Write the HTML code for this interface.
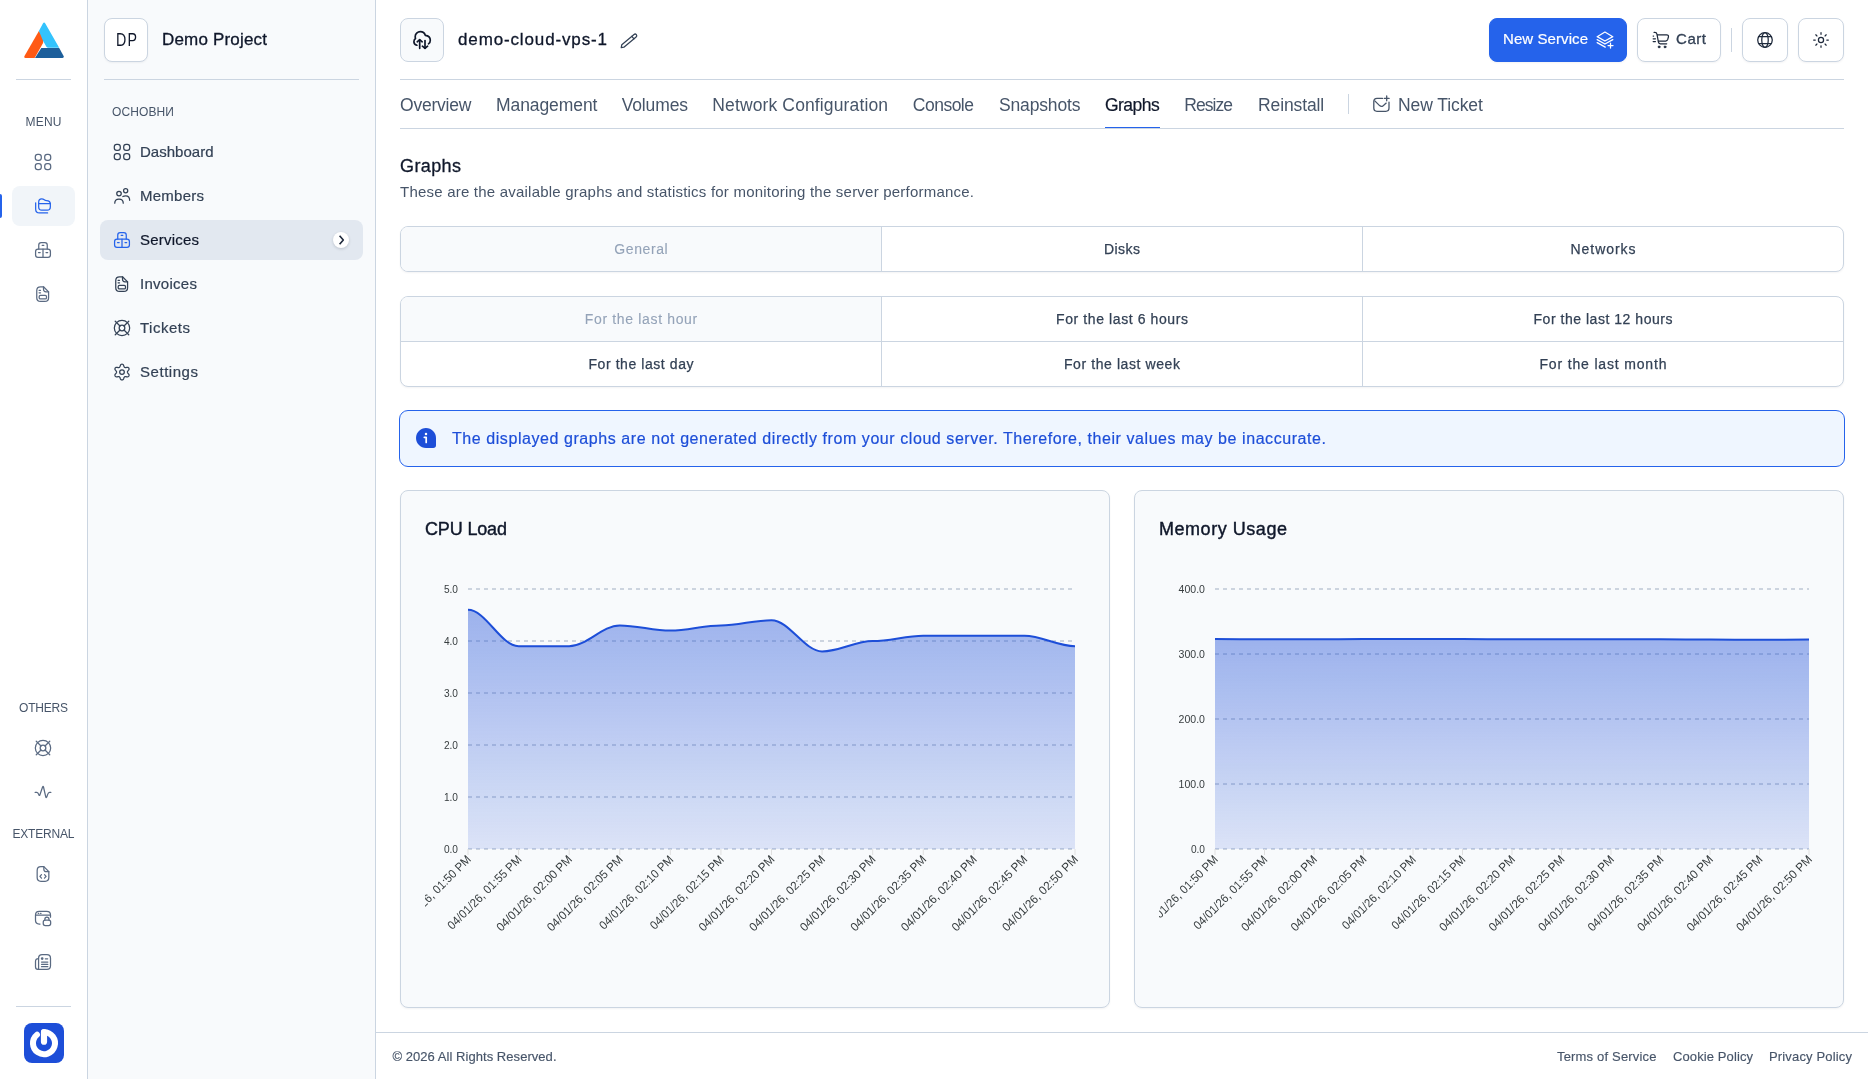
<!DOCTYPE html><html lang="en"><head><meta charset="utf-8"><title>Graphs - demo-cloud-vps-1</title><style>
*{box-sizing:border-box;margin:0;padding:0}
html,body{width:1868px;height:1079px;overflow:hidden;background:#fff}
body{font-family:"Liberation Sans",sans-serif;color:#334155;position:relative;-webkit-font-smoothing:antialiased}
#root{position:absolute;left:0;top:0;width:1868px;height:1079px;will-change:transform}
.abs{position:absolute}
.ic{display:inline-flex;align-items:center;justify-content:center;flex:none}
.ic svg{display:block}
.t{position:absolute;white-space:nowrap;line-height:20px;height:20px}
#rail{left:0;top:0;width:88px;height:1079px;background:#fff;border-right:1px solid #cbd5e1}
#side{left:88px;top:0;width:288px;height:1079px;background:#f8fafc;border-right:1px solid #cbd5e1}
.hr{position:absolute;height:1px;background:#cbd5e1}
.rl{position:absolute;margin-top:1px;left:0;width:87px;text-align:center;font-size:12px;color:#475569;line-height:16px;height:16px}
.ri{position:absolute;left:33px;width:20px;height:20px;color:#5a6a82}
.si{position:absolute;left:100px;width:263px;height:40px;border-radius:8px;color:#334155}
.si .ic{position:absolute;left:12px;top:10px}
.si .lb{position:absolute;left:40px;top:10px;line-height:20px;font-size:15px;font-weight:500;white-space:nowrap;-webkit-text-stroke:.2px currentColor}
.btn{position:absolute;top:18px;height:44px;border-radius:8px;border:1px solid #cbd5e1;background:#fff;box-shadow:0 1px 2px rgba(15,23,42,.05)}
.tab{position:absolute;top:95px;line-height:20px;font-size:17.500px;color:#475569;white-space:nowrap}
.seg{position:absolute;left:400px;width:1444px;border:1px solid #cbd5e1;border-radius:8px;background:#fff;overflow:hidden;box-shadow:0 1px 2px rgba(15,23,42,.05)}
.cell{position:absolute;height:44px;width:480px;text-align:center;font-size:14px;line-height:44px;color:#334155;-webkit-text-stroke:.25px currentColor;white-space:nowrap}
.cell.on{background:#f8fafc;color:#94a3b8;-webkit-text-stroke:.1px currentColor}
.vl{position:absolute;width:1px;background:#cbd5e1;top:0;bottom:0}
.card{position:absolute;top:490px;width:710px;height:518px;border:1px solid #cbd5e1;border-radius:8px;background:#f8fafc;box-shadow:0 1px 2px rgba(15,23,42,.05)}
.card h3{position:absolute;left:24px;top:26px;font-size:18px;line-height:24px;font-weight:500;color:#0f172a;white-space:nowrap;-webkit-text-stroke:.4px currentColor}
.card svg{position:absolute;left:0;top:0}
.ft{position:absolute;top:1047px;line-height:20px;font-size:13px;color:#475569;white-space:nowrap;-webkit-text-stroke:.15px currentColor}
</style></head><body><div id="root">
<div id="rail" class="abs">
<svg class="abs" style="left:24px;top:20.800px" width="40" height="38.750" viewBox="0 0 40 38" preserveAspectRatio="none">
<path d="M14.900 9.800 L19.100 15.400 L19.100 21.500 L10.600 36.300 L1.500 36.300 Q-.3 36.100 .5 34.300 Z" fill="#ff5a14"/>
<path d="M14.900 9.800 L18.900 2.400 Q20.100 .7 21.300 2.400 L35.200 26.300 L24.200 26.300 Q23 26.300 22.400 25.200 L19.100 19.500 Z" fill="#33c3fd"/>
<path d="M17.300 26.400 L35.200 26.400 L39.600 34.200 Q40.400 36.100 38.500 36.300 L11 36.300 Z" fill="#1d5f9b"/>
</svg>
<div class="hr" style="left:16px;top:79px;width:55px"></div>
<div class="rl" style="top:113px"><span style="letter-spacing:0.219px;margin-right:-0.219px">MENU</span></div>
<div class="ri" style="top:152px;"><svg width="20" height="20" viewBox="0 0 24 24" fill="none" stroke="currentColor" stroke-width="1.5" stroke-linecap="round" stroke-linejoin="round" ><rect x="2.75" y="2.75" width="7.2" height="7.2" rx="2.9"/><rect x="2.75" y="14.05" width="7.2" height="7.2" rx="2.9"/><rect x="14.05" y="2.75" width="7.2" height="7.2" rx="2.9"/><rect x="14.05" y="14.05" width="7.2" height="7.2" rx="2.9"/></svg></div>
<div class="abs" style="left:0;top:194px;width:2px;height:24px;background:#2563eb;border-radius:0 2px 2px 0"></div>
<div class="abs" style="left:12px;top:186px;width:63px;height:40px;border-radius:8px;background:#f1f5f9"></div>
<div class="ri" style="top:196px;color:#2563eb"><svg width="20" height="20" viewBox="0 0 24 24" fill="none" stroke="currentColor" stroke-width="1.5" stroke-linecap="round" stroke-linejoin="round" ><path d="M3.200 8.200v7.600c0 3 1.500 4.500 4.500 4.500h9.800"/><path d="M6.800 7.400c0-2.700 1.200-3.900 3.600-3.900 1.400 0 2.200.3 3.100 1 .9.700 1.500.9 2.700.9 3 0 4.600 1.300 4.600 4.300v3.400c0 2.500-1.300 3.800-3.800 3.800h-6.400c-2.500 0-3.800-1.300-3.800-3.800z"/><path d="M6.800 9.200h14"/></svg></div>
<div class="ri" style="top:240px;"><svg width="20" height="20" viewBox="0 0 24 24" fill="none" stroke="currentColor" stroke-width="1.5" stroke-linecap="round" stroke-linejoin="round" ><path d="M6.9 10.9V5.9c0-1.9 1-2.9 2.9-2.9h4.4c1.9 0 2.9 1 2.9 2.9v5"/><rect x="3.1" y="10.9" width="17.8" height="10" rx="2.9"/><path d="M12 10.9v10"/><path d="M11 6.4h2"/><path d="M6.6 15h2"/><path d="M15.6 15h2"/></svg></div>
<div class="ri" style="top:284px;"><svg width="20" height="20" viewBox="0 0 24 24" fill="none" stroke="currentColor" stroke-width="1.5" stroke-linecap="round" stroke-linejoin="round" ><path d="M12.6 3.3H9c-3 0-4.5 1.5-4.500 4.500v8.600c0 3 1.500 4.500 4.500 4.500h5.200c3 0 4.500-1.500 4.500-4.500V9.400z"/><path d="M12.600 3.300v3.100c0 2 1 3 3 3h3.100"/><path d="M7.300 7.600h1.700"/><path d="M7.300 10.600h1.700"/><rect x="7.4" y="13.700" width="8.800" height="4.200" rx="1.500"/></svg></div>
<div class="rl" style="top:699px"><span style="letter-spacing:-0.203px;margin-right:0.203px">OTHERS</span></div>
<div class="ri" style="top:738px"><svg width="20" height="20" viewBox="0 0 24 24" fill="none" stroke="currentColor" stroke-width="1.5" stroke-linecap="round" stroke-linejoin="round" ><circle cx="12" cy="12" r="9.200"/><circle cx="12" cy="12" r="3.400"/><path d="M3.900 3.900l5.700 5.700"/><path d="M20.100 3.900l-5.700 5.700"/><path d="M3.900 20.100l5.700-5.700"/><path d="M20.100 20.100l-5.700-5.700"/></svg></div>
<div class="ri" style="top:782px"><svg width="20" height="20" viewBox="0 0 24 24" fill="none" stroke="currentColor" stroke-width="1.5" stroke-linecap="round" stroke-linejoin="round" ><path d="M2.600 12.500h2c1.300 0 1.800 1 2.300 2.600.4 1.300 1 1.500 1.400.2L11.500 6c.3-1 .8-1 1.100 0l2.700 11.800c.3 1.200.9 1.100 1.300 0l.9-2.700c.5-1.600 1-2.600 2.300-2.600h1.600"/></svg></div>
<div class="rl" style="top:825px"><span style="letter-spacing:-0.194px;margin-right:0.194px">EXTERNAL</span></div>
<div class="ri" style="top:864px"><svg width="20" height="20" viewBox="0 0 24 24" fill="none" stroke="currentColor" stroke-width="1.5" stroke-linecap="round" stroke-linejoin="round" ><path d="M13 3.200H9.500c-3 0-4.500 1.500-4.500 4.500v8.600c0 3 1.500 4.500 4.500 4.500h5c3 0 4.500-1.500 4.500-4.500V9.200z"/><path d="M13 3.200v3c0 2 1 3 3 3h3"/><path d="M10.200 12.800l-1.900 2.100 1.900 2.100"/><path d="M13.800 12.800l1.900 2.100-1.900 2.100"/></svg></div>
<div class="ri" style="top:908px"><svg width="20" height="20" viewBox="0 0 24 24" fill="none" stroke="currentColor" stroke-width="1.5" stroke-linecap="round" stroke-linejoin="round" ><path d="M21 11V8.500c0-3-1.500-4.500-4.500-4.500h-9C4.500 4 3 5.500 3 8.500v6.300c0 3 1.500 4.500 4.500 4.500h.9"/><path d="M3.200 8.600h17.600"/><path d="M6.300 6.300h.6"/><path d="M9 6.300h.6"/><rect x="12.300" y="14.600" width="8.900" height="6.400" rx="2.400"/><path d="M14.200 14.600v-.9c0-1.700 1-2.700 2.500-2.700s2.500 1 2.500 2.700v.9"/></svg></div>
<div class="ri" style="top:952px"><svg width="20" height="20" viewBox="0 0 24 24" fill="none" stroke="currentColor" stroke-width="1.5" stroke-linecap="round" stroke-linejoin="round" ><path d="M6.700 7.500c0-3 1.300-4.300 4.300-4.300h5.700c3 0 4.300 1.300 4.300 4.300v9c0 3-1.300 4.300-4.300 4.300H6"/><path d="M6.700 7.800c-2.500 0-3.700 1.200-3.700 3.700v6.200c0 2 1 3.100 2.800 3.100 1 0 .900-1 .900-2.300z"/><circle cx="11" cy="7.800" r=".9" fill="currentColor"/><path d="M14.800 8.200h2.800"/><path d="M10.200 12h7.600"/><path d="M10.200 14.800h7.600"/><path d="M10.200 17.600h7.600"/></svg></div>
<div class="hr" style="left:16px;top:1006px;width:55px"></div>
<div class="abs" style="left:24px;top:1023px;width:40px;height:40px;border-radius:8px;background:#1d4ed8">
<svg width="40" height="40" viewBox="0 0 40 40"><path d="M20 9.200A11 11 0 1 1 13 11.700" fill="none" stroke="#fff" stroke-width="6" stroke-linecap="round"/><path d="M20 9.100V18.700" stroke="#fff" stroke-width="6.200" stroke-linecap="round"/></svg></div>
</div>
<div id="side" class="abs">
</div>
<div class="abs" style="left:104px;top:18px;width:44px;height:44px;border:1px solid #cbd5e1;border-radius:8px;background:#fff;box-shadow:0 1px 2px rgba(15,23,42,.05)"></div>
<div class="t" style="left:115.800px;top:30px;font-size:18px;color:#0f172a;transform-origin:0 50%;transform:scaleX(.79);letter-spacing:1.500px">DP</div>
<div class="t" style="left:162px;top:30px;font-size:17px;font-weight:500;color:#0f172a;-webkit-text-stroke:.3px currentColor"><span style="letter-spacing:0.183px;margin-right:-0.183px">Demo Project</span></div>
<div class="hr" style="left:104px;top:79px;width:255px"></div>
<div class="t" style="left:112px;top:102px;font-size:12px;color:#475569"><span style="letter-spacing:0.117px;margin-right:-0.117px">ОСНОВНИ</span></div>
<div class="si" style="top:132px;"><span class="ic" style="width:20px;height:20px;"><svg width="20" height="20" viewBox="0 0 24 24" fill="none" stroke="currentColor" stroke-width="1.5" stroke-linecap="round" stroke-linejoin="round" ><rect x="2.75" y="2.75" width="7.2" height="7.2" rx="2.9"/><rect x="2.75" y="14.05" width="7.2" height="7.2" rx="2.9"/><rect x="14.05" y="2.75" width="7.2" height="7.2" rx="2.9"/><rect x="14.05" y="14.05" width="7.2" height="7.2" rx="2.9"/></svg></span><span class="lb"><span style="letter-spacing:0.014px;margin-right:-0.014px">Dashboard</span></span>
</div>
<div class="si" style="top:176px;"><span class="ic" style="width:20px;height:20px;"><svg width="20" height="20" viewBox="0 0 24 24" fill="none" stroke="currentColor" stroke-width="1.5" stroke-linecap="round" stroke-linejoin="round" ><circle cx="8.4" cy="9" r="2.7"/><circle cx="16.4" cy="5.6" r="2.5"/><path d="M3.3 20.6c0-2.9 2.2-4.9 5.1-4.9s5.1 2 5.1 4.9"/><path d="M13 12.6c1-.6 2.1-.9 3.4-.9 2.9 0 4.8 2.1 4.8 5.4"/></svg></span><span class="lb"><span style="letter-spacing:0.247px;margin-right:-0.247px">Members</span></span>
</div>
<div class="si" style="top:220px;background:#e2e8f0;color:#0f172a;"><span class="ic" style="width:20px;height:20px;color:#2563eb"><svg width="20" height="20" viewBox="0 0 24 24" fill="none" stroke="currentColor" stroke-width="1.5" stroke-linecap="round" stroke-linejoin="round" ><path d="M6.9 10.9V5.9c0-1.9 1-2.9 2.9-2.9h4.4c1.9 0 2.9 1 2.9 2.9v5"/><rect x="3.1" y="10.9" width="17.8" height="10" rx="2.9"/><path d="M12 10.9v10"/><path d="M11 6.4h2"/><path d="M6.6 15h2"/><path d="M15.6 15h2"/></svg></span><span class="lb"><span style="letter-spacing:0.210px;margin-right:-0.210px">Services</span></span>
<span class="abs" style="right:14px;top:12px;width:16px;height:16px;border-radius:50%;background:#fff;box-shadow:0 1px 3px rgba(15,23,42,.18);color:#1e293b"><svg width="16" height="16" viewBox="0 0 16 16" fill="none" stroke="currentColor" stroke-width="1.600" stroke-linecap="butt" stroke-linejoin="round"><path d="M6.600 3.700L10.300 8L6.600 12.300"/></svg></span>
</div>
<div class="si" style="top:264px;"><span class="ic" style="width:20px;height:20px;"><svg width="20" height="20" viewBox="0 0 24 24" fill="none" stroke="currentColor" stroke-width="1.5" stroke-linecap="round" stroke-linejoin="round" ><path d="M12.6 3.3H9c-3 0-4.5 1.5-4.500 4.500v8.600c0 3 1.500 4.500 4.500 4.500h5.200c3 0 4.500-1.500 4.500-4.500V9.400z"/><path d="M12.600 3.300v3.100c0 2 1 3 3 3h3.100"/><path d="M7.300 7.600h1.700"/><path d="M7.300 10.600h1.700"/><rect x="7.4" y="13.700" width="8.800" height="4.200" rx="1.500"/></svg></span><span class="lb"><span style="letter-spacing:0.281px;margin-right:-0.281px">Invoices</span></span>
</div>
<div class="si" style="top:308px;"><span class="ic" style="width:20px;height:20px;"><svg width="20" height="20" viewBox="0 0 24 24" fill="none" stroke="currentColor" stroke-width="1.5" stroke-linecap="round" stroke-linejoin="round" ><circle cx="12" cy="12" r="9.200"/><circle cx="12" cy="12" r="3.400"/><path d="M3.900 3.900l5.700 5.700"/><path d="M20.100 3.900l-5.700 5.700"/><path d="M3.900 20.100l5.700-5.700"/><path d="M20.100 20.100l-5.700-5.700"/></svg></span><span class="lb"><span style="letter-spacing:0.508px;margin-right:-0.508px">Tickets</span></span>
</div>
<div class="si" style="top:352px;"><span class="ic" style="width:20px;height:20px;"><svg width="20" height="20" viewBox="0 0 24 24" fill="none" stroke="currentColor" stroke-width="1.5" stroke-linecap="round" stroke-linejoin="round" ><path d="M12.00 2.60 L12.62 2.70 L13.20 3.00 L13.71 3.50 L14.07 4.37 L14.33 5.25 L14.61 5.80 L14.91 6.20 L15.25 6.47 L15.66 6.63 L16.15 6.69 L16.77 6.66 L17.66 6.44 L18.59 6.32 L19.28 6.51 L19.83 6.87 L20.23 7.35 L20.45 7.93 L20.48 8.59 L20.30 9.28 L19.73 10.03 L19.10 10.69 L18.76 11.21 L18.57 11.67 L18.50 12.10 L18.57 12.53 L18.76 12.99 L19.10 13.51 L19.73 14.17 L20.30 14.92 L20.48 15.61 L20.45 16.27 L20.23 16.85 L19.83 17.33 L19.28 17.69 L18.59 17.88 L17.66 17.76 L16.77 17.54 L16.15 17.51 L15.66 17.57 L15.25 17.73 L14.91 18.00 L14.61 18.40 L14.33 18.95 L14.07 19.83 L13.71 20.70 L13.20 21.20 L12.62 21.50 L12.00 21.60 L11.38 21.50 L10.80 21.20 L10.29 20.70 L9.93 19.83 L9.67 18.95 L9.39 18.40 L9.09 18.00 L8.75 17.73 L8.34 17.57 L7.85 17.51 L7.23 17.54 L6.34 17.76 L5.41 17.88 L4.72 17.69 L4.17 17.33 L3.77 16.85 L3.55 16.27 L3.52 15.61 L3.70 14.92 L4.27 14.17 L4.90 13.51 L5.24 12.99 L5.43 12.53 L5.50 12.10 L5.43 11.67 L5.24 11.21 L4.90 10.69 L4.27 10.03 L3.70 9.28 L3.52 8.59 L3.55 7.93 L3.77 7.35 L4.17 6.87 L4.72 6.51 L5.41 6.32 L6.34 6.44 L7.23 6.66 L7.85 6.69 L8.34 6.63 L8.75 6.47 L9.09 6.20 L9.39 5.80 L9.67 5.25 L9.93 4.37 L10.29 3.50 L10.80 3.00 L11.38 2.70Z"/><circle cx="12" cy="12.100" r="2.800"/></svg></span><span class="lb"><span style="letter-spacing:0.542px;margin-right:-0.542px">Settings</span></span>
</div>
<div class="abs" style="left:400px;top:18px;width:44px;height:44px;border:1px solid #cbd5e1;border-radius:8px;background:#f8fafc;color:#0f172a;display:flex;align-items:center;justify-content:center"><svg width="44" height="44" viewBox="0 0 44 44" fill="none" stroke="currentColor" stroke-width="1.700" stroke-linecap="round" stroke-linejoin="round" style="position:absolute;left:-1px;top:-1px"><path d="M16.900 27.200C14.900 26.600 13.900 25.300 13.900 23.700c0-1.400.700-2.600 1.600-3.200-.300-.600-.300-1.200-.300-1.900 0-2.800 2.300-4.900 5.100-4.900 2.400 0 4.300 1.400 5.000 3.600 2.900.300 5.000 2.400 5.000 5.000 0 1.700-.700 2.900-1.800 3.600"/><path d="M19.700 30.300V22"/><path d="M17.200 23.800l2.500-2.100 2.500 2.100"/><path d="M25 22.500v7.700"/><path d="M22.400 28.200l2.600 2.100 2.600-2.100"/></svg></div>
<div class="t" style="left:458px;top:30px;font-size:17px;font-weight:500;color:#0f172a;-webkit-text-stroke:.3px currentColor"><span style="letter-spacing:0.863px;margin-right:-0.863px">demo-cloud-vps-1</span></div>
<div class="abs" style="left:619px;top:30px;width:20px;height:20px;color:#334155"><svg width="20" height="20" viewBox="0 0 24 24" fill="none" stroke="currentColor" stroke-width="1.5" stroke-linecap="round" stroke-linejoin="round" ><path d="M2.700 21.100L3.35 17.60L18.05 5.40A1.95 1.95 0 0 1 20.55 8.40L5.85 20.60Z"/><path d="M15.44 7.57L17.93 10.57"/></svg></div>
<div class="hr" style="left:400px;top:79px;width:1444px"></div>
<div class="btn" style="left:1489px;width:138px;background:#2563eb;border-color:#2563eb;color:#fff"><span class="t" style="left:13px;top:10px;font-size:15px;font-weight:500;-webkit-text-stroke:.2px currentColor"><span style="letter-spacing:0.080px;margin-right:-0.080px">New Service</span></span><span class="abs" style="left:105px;top:11px;width:20px;height:20px"><svg width="20" height="20" viewBox="0 0 24 24" fill="none" stroke="currentColor" stroke-width="1.5" stroke-linecap="round" stroke-linejoin="round" ><path d="M2.600 8l9.300-5.500 9.500 5.500-9.500 5.200z"/><path d="M2.600 11.600l9.300 5.200 9.500-5.200"/><path d="M2.600 15.200l9.700 5.400"/><path d="M18.600 15.600v6"/><path d="M15.600 18.600h6"/></svg></span></div>
<div class="btn" style="left:1637px;width:84px;color:#1e293b"><span class="abs" style="left:12px;top:11px;width:20px;height:20px"><svg width="20" height="20" viewBox="0 0 24 24" fill="none" stroke="currentColor" stroke-width="1.5" stroke-linecap="round" stroke-linejoin="round" ><path d="M4.900 2.900h.8c1.500 0 2.400.7 2.700 2.200l1.700 9.500c.2 1.300 1 1.900 2.300 1.900h7.600"/><path d="M8.700 5.700h11.300c1.700 0 2.500 1 2.100 2.600l-.8 3c-.4 1.300-1.200 1.900-2.500 1.900h-8.600"/><circle cx="10.900" cy="20.300" r="1.150" fill="currentColor" stroke-width="1"/><circle cx="18" cy="20.300" r="1.150" fill="currentColor" stroke-width="1"/><path d="M3.800 7.200h.5"/><path d="M3.800 10.600h2.700"/><path d="M3.800 13.800h2.700"/></svg></span><span class="t" style="left:38px;top:10px;font-size:15px;font-weight:500;color:#334155;-webkit-text-stroke:.3px currentColor"><span style="letter-spacing:0.552px;margin-right:-0.552px">Cart</span></span></div>
<div class="abs" style="left:1731px;top:28px;width:1px;height:24px;background:#cbd5e1"></div>
<div class="btn" style="left:1742px;width:46px;color:#1e293b"><span class="abs" style="left:12px;top:11px;width:20px;height:20px"><svg width="20" height="20" viewBox="0 0 24 24" fill="none" stroke="currentColor" stroke-width="1.5" stroke-linecap="round" stroke-linejoin="round" ><circle cx="12" cy="12" r="8.750"/><ellipse cx="12" cy="12" rx="3.900" ry="8.750"/><path d="M4.300 7.800h15.400"/><path d="M4.300 16.200h15.400"/></svg></span></div>
<div class="btn" style="left:1798px;width:46px;color:#1e293b"><span class="abs" style="left:12px;top:11px;width:20px;height:20px"><svg width="20" height="20" viewBox="0 0 24 24" fill="none" stroke="currentColor" stroke-width="1.5" stroke-linecap="round" stroke-linejoin="round" ><circle cx="12" cy="12" r="3.100"/><path d="M18.90 12.00L20.80 12.00"/><path d="M16.88 16.88L18.22 18.22"/><path d="M12.00 18.90L12.00 20.80"/><path d="M7.12 16.88L5.78 18.22"/><path d="M5.10 12.00L3.20 12.00"/><path d="M7.12 7.12L5.78 5.78"/><path d="M12.00 5.10L12.00 3.20"/><path d="M16.88 7.12L18.22 5.78"/></svg></span></div>
<div class="tab" style="left:400.0px;"><span style="letter-spacing:-0.220px;margin-right:0.220px">Overview</span></div>
<div class="tab" style="left:496.0px;"><span style="letter-spacing:-0.084px;margin-right:0.084px">Management</span></div>
<div class="tab" style="left:621.7px;"><span style="letter-spacing:-0.138px;margin-right:0.138px">Volumes</span></div>
<div class="tab" style="left:712.3px;"><span style="letter-spacing:0.128px;margin-right:-0.128px">Network Configuration</span></div>
<div class="tab" style="left:912.8px;"><span style="letter-spacing:-0.503px;margin-right:0.503px">Console</span></div>
<div class="tab" style="left:999.0px;"><span style="letter-spacing:-0.150px;margin-right:0.150px">Snapshots</span></div>
<div class="tab" style="left:1104.9px;color:#0f172a;font-weight:500;-webkit-text-stroke:.2px currentColor;"><span style="letter-spacing:-0.518px;margin-right:0.518px">Graphs</span></div>
<div class="tab" style="left:1184.2px;"><span style="letter-spacing:-0.920px;margin-right:0.920px">Resize</span></div>
<div class="tab" style="left:1258.0px;"><span style="letter-spacing:-0.116px;margin-right:0.116px">Reinstall</span></div>
<div class="abs" style="left:1105px;top:127px;width:55px;height:2px;background:#2563eb"></div>
<div class="abs" style="left:1348px;top:94px;width:1px;height:20px;background:#cbd5e1"></div>
<div class="abs" style="left:1372px;top:94px;width:20px;height:20px;color:#475569"><svg width="20" height="20" viewBox="1372 94 20 20" fill="none" stroke="currentColor" stroke-width="1.300" stroke-linecap="round" stroke-linejoin="round"><path d="M1382.500 98.400H1377Q1373.800 98.400 1373.800 101.600V108.100Q1373.800 111.300 1377 111.300H1385.800Q1389 111.300 1389 108.100V102.100"/><path d="M1374.800 100.900L1379.600 105.600Q1381.400 107.200 1383.200 105.700L1386.200 103.100"/><path d="M1386.700 96V100.800M1384.300 98.400H1389.100"/></svg></div>
<div class="tab" style="left:1398px"><span style="letter-spacing:-0.086px;margin-right:0.086px">New Ticket</span></div>
<div class="hr" style="left:400px;top:128px;width:1444px"></div>
<div class="t" style="left:400px;top:154px;height:24px;line-height:24px;font-size:18px;font-weight:500;color:#0f172a;-webkit-text-stroke:.3px currentColor"><span style="letter-spacing:0.394px;margin-right:-0.394px">Graphs</span></div>
<div class="t" style="left:400px;top:182px;font-size:15px;color:#475569"><span style="letter-spacing:0.215px;margin-right:-0.215px">These are the available graphs and statistics for monitoring the server performance.</span></div>
<div class="seg" style="top:226px;height:46px">
<div class="cell on" style="left:0px;top:0"><span style="letter-spacing:0.615px;margin-right:-0.615px">General</span></div>
<div class="cell" style="left:481px;top:0"><span style="letter-spacing:0.441px;margin-right:-0.441px">Disks</span></div>
<div class="cell" style="left:962px;top:0"><span style="letter-spacing:0.949px;margin-right:-0.949px">Networks</span></div>
<div class="vl" style="left:480px"></div><div class="vl" style="left:961px"></div></div>
<div class="seg" style="top:296px;height:91px">
<div class="cell on" style="left:0px;top:0px"><span style="letter-spacing:0.660px;margin-right:-0.660px">For the last hour</span></div>
<div class="cell" style="left:481px;top:0px"><span style="letter-spacing:0.599px;margin-right:-0.599px">For the last 6 hours</span></div>
<div class="cell" style="left:962px;top:0px"><span style="letter-spacing:0.530px;margin-right:-0.530px">For the last 12 hours</span></div>
<div class="cell" style="left:0px;top:45px"><span style="letter-spacing:0.567px;margin-right:-0.567px">For the last day</span></div>
<div class="cell" style="left:481px;top:45px"><span style="letter-spacing:0.587px;margin-right:-0.587px">For the last week</span></div>
<div class="cell" style="left:962px;top:45px"><span style="letter-spacing:0.834px;margin-right:-0.834px">For the last month</span></div>
<div class="vl" style="left:480px"></div><div class="vl" style="left:961px"></div><div class="hr" style="left:0;top:44px;width:1444px"></div></div>
<div class="abs" style="left:399px;top:410px;width:1446px;height:57px;border:1px solid #2563eb;border-radius:9px;background:#eff6ff"></div>
<svg class="abs" style="left:416px;top:428px" width="20" height="20" viewBox="0 0 20 20"><path d="M10 0C4.500 0 0 4.500 0 10s4.500 10 10 10h7.200c1.700 0 2.800-1.100 2.800-2.800V10c0-5.500-4.500-10-10-10z" fill="#1d4ed8"/><circle cx="10" cy="6" r="1.250" fill="#fff"/><path d="M8.300 9.300h1.900v5.200" stroke="#fff" stroke-width="1.700" fill="none" stroke-linecap="round" stroke-linejoin="round"/></svg>
<div class="t" style="left:452px;top:429px;font-size:16px;color:#1d4ed8;-webkit-text-stroke:.2px currentColor"><span style="letter-spacing:0.567px;margin-right:-0.567px">The displayed graphs are not generated directly from your cloud server. Therefore, their values may be inaccurate.</span></div>
<div class="card" style="left:400px"><svg style="left:24px;top:69px;overflow:hidden" width="660" height="430" viewBox="0 0 660 430" font-family='"Liberation Sans",Helvetica,Arial,sans-serif'><defs><linearGradient id="gc" x1="0" y1="0" x2="0" y2="1"><stop offset="0" stop-color="#1d4ed8" stop-opacity="0.42"/><stop offset="1" stop-color="#1d4ed8" stop-opacity="0.13"/></linearGradient></defs><line x1="43.00" y1="29.00" x2="650.00" y2="29.00" stroke="#a0aec2" stroke-width="1" stroke-dasharray="4"/><line x1="43.00" y1="81.00" x2="650.00" y2="81.00" stroke="#a0aec2" stroke-width="1" stroke-dasharray="4"/><line x1="43.00" y1="133.00" x2="650.00" y2="133.00" stroke="#a0aec2" stroke-width="1" stroke-dasharray="4"/><line x1="43.00" y1="185.00" x2="650.00" y2="185.00" stroke="#a0aec2" stroke-width="1" stroke-dasharray="4"/><line x1="43.00" y1="237.00" x2="650.00" y2="237.00" stroke="#a0aec2" stroke-width="1" stroke-dasharray="4"/><line x1="43.00" y1="289.00" x2="650.00" y2="289.00" stroke="#a0aec2" stroke-width="1" stroke-dasharray="4"/><line x1="43.00" y1="289.00" x2="43.00" y2="295.00" stroke="#e0e0e0" stroke-width="1"/><line x1="93.58" y1="289.00" x2="93.58" y2="295.00" stroke="#e0e0e0" stroke-width="1"/><line x1="144.17" y1="289.00" x2="144.17" y2="295.00" stroke="#e0e0e0" stroke-width="1"/><line x1="194.75" y1="289.00" x2="194.75" y2="295.00" stroke="#e0e0e0" stroke-width="1"/><line x1="245.33" y1="289.00" x2="245.33" y2="295.00" stroke="#e0e0e0" stroke-width="1"/><line x1="295.92" y1="289.00" x2="295.92" y2="295.00" stroke="#e0e0e0" stroke-width="1"/><line x1="346.50" y1="289.00" x2="346.50" y2="295.00" stroke="#e0e0e0" stroke-width="1"/><line x1="397.08" y1="289.00" x2="397.08" y2="295.00" stroke="#e0e0e0" stroke-width="1"/><line x1="447.67" y1="289.00" x2="447.67" y2="295.00" stroke="#e0e0e0" stroke-width="1"/><line x1="498.25" y1="289.00" x2="498.25" y2="295.00" stroke="#e0e0e0" stroke-width="1"/><line x1="548.83" y1="289.00" x2="548.83" y2="295.00" stroke="#e0e0e0" stroke-width="1"/><line x1="599.42" y1="289.00" x2="599.42" y2="295.00" stroke="#e0e0e0" stroke-width="1"/><line x1="650.00" y1="289.00" x2="650.00" y2="295.00" stroke="#e0e0e0" stroke-width="1"/><path d="M43.00 49.80C60.70 49.80 75.88 86.20 93.58 86.20C111.29 86.20 126.46 86.20 144.17 86.20C161.87 86.20 177.05 65.40 194.75 65.40C212.45 65.40 227.63 70.60 245.33 70.60C263.04 70.60 278.21 65.40 295.92 65.40C313.62 65.40 328.80 60.20 346.50 60.20C364.20 60.20 379.38 91.40 397.08 91.40C414.79 91.40 429.96 81.00 447.67 81.00C465.37 81.00 480.55 75.80 498.25 75.80C515.95 75.80 531.13 75.80 548.83 75.80C566.54 75.80 581.71 75.80 599.42 75.80C617.12 75.80 632.30 86.20 650.00 86.20L650.00 289.00L43.00 289.00Z" fill="url(#gc)"/><path d="M43.00 49.80C60.70 49.80 75.88 86.20 93.58 86.20C111.29 86.20 126.46 86.20 144.17 86.20C161.87 86.20 177.05 65.40 194.75 65.40C212.45 65.40 227.63 70.60 245.33 70.60C263.04 70.60 278.21 65.40 295.92 65.40C313.62 65.40 328.80 60.20 346.50 60.20C364.20 60.20 379.38 91.40 397.08 91.40C414.79 91.40 429.96 81.00 447.67 81.00C465.37 81.00 480.55 75.80 498.25 75.80C515.95 75.80 531.13 75.80 548.83 75.80C566.54 75.80 581.71 75.80 599.42 75.80C617.12 75.80 632.30 86.20 650.00 86.20" fill="none" stroke="#1d4ed8" stroke-width="2" stroke-linecap="butt"/><text x="33.00" y="33.00" text-anchor="end" font-size="11" fill="#373d3f" textLength="14.1" lengthAdjust="spacingAndGlyphs">5.0</text><text x="33.00" y="85.00" text-anchor="end" font-size="11" fill="#373d3f" textLength="14.1" lengthAdjust="spacingAndGlyphs">4.0</text><text x="33.00" y="137.00" text-anchor="end" font-size="11" fill="#373d3f" textLength="14.1" lengthAdjust="spacingAndGlyphs">3.0</text><text x="33.00" y="189.00" text-anchor="end" font-size="11" fill="#373d3f" textLength="14.1" lengthAdjust="spacingAndGlyphs">2.0</text><text x="33.00" y="241.00" text-anchor="end" font-size="11" fill="#373d3f" textLength="14.1" lengthAdjust="spacingAndGlyphs">1.0</text><text x="33.00" y="293.00" text-anchor="end" font-size="11" fill="#373d3f" textLength="14.1" lengthAdjust="spacingAndGlyphs">0.0</text><text x="46.80" y="300.20" text-anchor="end" font-size="12" fill="#373d3f" textLength="99.0" lengthAdjust="spacingAndGlyphs" transform="rotate(-45 46.80 300.20)">04/01/26, 01:50 PM</text><text x="97.38" y="300.20" text-anchor="end" font-size="12" fill="#373d3f" textLength="99.0" lengthAdjust="spacingAndGlyphs" transform="rotate(-45 97.38 300.20)">04/01/26, 01:55 PM</text><text x="147.97" y="300.20" text-anchor="end" font-size="12" fill="#373d3f" textLength="101.5" lengthAdjust="spacingAndGlyphs" transform="rotate(-45 147.97 300.20)">04/01/26, 02:00 PM</text><text x="198.55" y="300.20" text-anchor="end" font-size="12" fill="#373d3f" textLength="101.5" lengthAdjust="spacingAndGlyphs" transform="rotate(-45 198.55 300.20)">04/01/26, 02:05 PM</text><text x="249.13" y="300.20" text-anchor="end" font-size="12" fill="#373d3f" textLength="99.0" lengthAdjust="spacingAndGlyphs" transform="rotate(-45 249.13 300.20)">04/01/26, 02:10 PM</text><text x="299.72" y="300.20" text-anchor="end" font-size="12" fill="#373d3f" textLength="99.0" lengthAdjust="spacingAndGlyphs" transform="rotate(-45 299.72 300.20)">04/01/26, 02:15 PM</text><text x="350.30" y="300.20" text-anchor="end" font-size="12" fill="#373d3f" textLength="101.5" lengthAdjust="spacingAndGlyphs" transform="rotate(-45 350.30 300.20)">04/01/26, 02:20 PM</text><text x="400.88" y="300.20" text-anchor="end" font-size="12" fill="#373d3f" textLength="101.5" lengthAdjust="spacingAndGlyphs" transform="rotate(-45 400.88 300.20)">04/01/26, 02:25 PM</text><text x="451.47" y="300.20" text-anchor="end" font-size="12" fill="#373d3f" textLength="101.5" lengthAdjust="spacingAndGlyphs" transform="rotate(-45 451.47 300.20)">04/01/26, 02:30 PM</text><text x="502.05" y="300.20" text-anchor="end" font-size="12" fill="#373d3f" textLength="101.5" lengthAdjust="spacingAndGlyphs" transform="rotate(-45 502.05 300.20)">04/01/26, 02:35 PM</text><text x="552.63" y="300.20" text-anchor="end" font-size="12" fill="#373d3f" textLength="101.5" lengthAdjust="spacingAndGlyphs" transform="rotate(-45 552.63 300.20)">04/01/26, 02:40 PM</text><text x="603.22" y="300.20" text-anchor="end" font-size="12" fill="#373d3f" textLength="101.5" lengthAdjust="spacingAndGlyphs" transform="rotate(-45 603.22 300.20)">04/01/26, 02:45 PM</text><text x="653.80" y="300.20" text-anchor="end" font-size="12" fill="#373d3f" textLength="101.5" lengthAdjust="spacingAndGlyphs" transform="rotate(-45 653.80 300.20)">04/01/26, 02:50 PM</text></svg><h3><span style="letter-spacing:-0.152px;margin-right:0.152px">CPU Load</span></h3></div>
<div class="card" style="left:1134px"><svg style="left:24px;top:69px;overflow:hidden" width="660" height="430" viewBox="0 0 660 430" font-family='"Liberation Sans",Helvetica,Arial,sans-serif'><defs><linearGradient id="gm" x1="0" y1="0" x2="0" y2="1"><stop offset="0" stop-color="#1d4ed8" stop-opacity="0.42"/><stop offset="1" stop-color="#1d4ed8" stop-opacity="0.13"/></linearGradient></defs><line x1="56.00" y1="29.00" x2="650.00" y2="29.00" stroke="#a0aec2" stroke-width="1" stroke-dasharray="4"/><line x1="56.00" y1="94.00" x2="650.00" y2="94.00" stroke="#a0aec2" stroke-width="1" stroke-dasharray="4"/><line x1="56.00" y1="159.00" x2="650.00" y2="159.00" stroke="#a0aec2" stroke-width="1" stroke-dasharray="4"/><line x1="56.00" y1="224.00" x2="650.00" y2="224.00" stroke="#a0aec2" stroke-width="1" stroke-dasharray="4"/><line x1="56.00" y1="289.00" x2="650.00" y2="289.00" stroke="#a0aec2" stroke-width="1" stroke-dasharray="4"/><line x1="56.00" y1="289.00" x2="56.00" y2="295.00" stroke="#e0e0e0" stroke-width="1"/><line x1="105.50" y1="289.00" x2="105.50" y2="295.00" stroke="#e0e0e0" stroke-width="1"/><line x1="155.00" y1="289.00" x2="155.00" y2="295.00" stroke="#e0e0e0" stroke-width="1"/><line x1="204.50" y1="289.00" x2="204.50" y2="295.00" stroke="#e0e0e0" stroke-width="1"/><line x1="254.00" y1="289.00" x2="254.00" y2="295.00" stroke="#e0e0e0" stroke-width="1"/><line x1="303.50" y1="289.00" x2="303.50" y2="295.00" stroke="#e0e0e0" stroke-width="1"/><line x1="353.00" y1="289.00" x2="353.00" y2="295.00" stroke="#e0e0e0" stroke-width="1"/><line x1="402.50" y1="289.00" x2="402.50" y2="295.00" stroke="#e0e0e0" stroke-width="1"/><line x1="452.00" y1="289.00" x2="452.00" y2="295.00" stroke="#e0e0e0" stroke-width="1"/><line x1="501.50" y1="289.00" x2="501.50" y2="295.00" stroke="#e0e0e0" stroke-width="1"/><line x1="551.00" y1="289.00" x2="551.00" y2="295.00" stroke="#e0e0e0" stroke-width="1"/><line x1="600.50" y1="289.00" x2="600.50" y2="295.00" stroke="#e0e0e0" stroke-width="1"/><line x1="650.00" y1="289.00" x2="650.00" y2="295.00" stroke="#e0e0e0" stroke-width="1"/><path d="M56.00 79.05C73.33 79.05 88.17 79.31 105.50 79.31C122.83 79.31 137.68 79.31 155.00 79.31C172.32 79.31 187.18 79.12 204.50 79.12C221.82 79.12 236.68 79.12 254.00 79.12C271.32 79.12 286.18 79.05 303.50 79.05C320.82 79.05 335.68 79.31 353.00 79.31C370.32 79.31 385.18 79.31 402.50 79.31C419.82 79.31 434.68 79.31 452.00 79.31C469.32 79.31 484.18 79.31 501.50 79.31C518.83 79.31 533.67 79.57 551.00 79.57C568.33 79.57 583.17 79.83 600.50 79.83C617.83 79.83 632.67 79.44 650.00 79.44L650.00 289.00L56.00 289.00Z" fill="url(#gm)"/><path d="M56.00 79.05C73.33 79.05 88.17 79.31 105.50 79.31C122.83 79.31 137.68 79.31 155.00 79.31C172.32 79.31 187.18 79.12 204.50 79.12C221.82 79.12 236.68 79.12 254.00 79.12C271.32 79.12 286.18 79.05 303.50 79.05C320.82 79.05 335.68 79.31 353.00 79.31C370.32 79.31 385.18 79.31 402.50 79.31C419.82 79.31 434.68 79.31 452.00 79.31C469.32 79.31 484.18 79.31 501.50 79.31C518.83 79.31 533.67 79.57 551.00 79.57C568.33 79.57 583.17 79.83 600.50 79.83C617.83 79.83 632.67 79.44 650.00 79.44" fill="none" stroke="#1d4ed8" stroke-width="2" stroke-linecap="butt"/><text x="46.00" y="33.00" text-anchor="end" font-size="11" fill="#373d3f" textLength="26.4" lengthAdjust="spacingAndGlyphs">400.0</text><text x="46.00" y="98.00" text-anchor="end" font-size="11" fill="#373d3f" textLength="26.4" lengthAdjust="spacingAndGlyphs">300.0</text><text x="46.00" y="163.00" text-anchor="end" font-size="11" fill="#373d3f" textLength="26.4" lengthAdjust="spacingAndGlyphs">200.0</text><text x="46.00" y="228.00" text-anchor="end" font-size="11" fill="#373d3f" textLength="26.4" lengthAdjust="spacingAndGlyphs">100.0</text><text x="46.00" y="293.00" text-anchor="end" font-size="11" fill="#373d3f" textLength="14.1" lengthAdjust="spacingAndGlyphs">0.0</text><text x="59.80" y="300.20" text-anchor="end" font-size="12" fill="#373d3f" textLength="99.0" lengthAdjust="spacingAndGlyphs" transform="rotate(-45 59.80 300.20)">04/01/26, 01:50 PM</text><text x="109.30" y="300.20" text-anchor="end" font-size="12" fill="#373d3f" textLength="99.0" lengthAdjust="spacingAndGlyphs" transform="rotate(-45 109.30 300.20)">04/01/26, 01:55 PM</text><text x="158.80" y="300.20" text-anchor="end" font-size="12" fill="#373d3f" textLength="101.5" lengthAdjust="spacingAndGlyphs" transform="rotate(-45 158.80 300.20)">04/01/26, 02:00 PM</text><text x="208.30" y="300.20" text-anchor="end" font-size="12" fill="#373d3f" textLength="101.5" lengthAdjust="spacingAndGlyphs" transform="rotate(-45 208.30 300.20)">04/01/26, 02:05 PM</text><text x="257.80" y="300.20" text-anchor="end" font-size="12" fill="#373d3f" textLength="99.0" lengthAdjust="spacingAndGlyphs" transform="rotate(-45 257.80 300.20)">04/01/26, 02:10 PM</text><text x="307.30" y="300.20" text-anchor="end" font-size="12" fill="#373d3f" textLength="99.0" lengthAdjust="spacingAndGlyphs" transform="rotate(-45 307.30 300.20)">04/01/26, 02:15 PM</text><text x="356.80" y="300.20" text-anchor="end" font-size="12" fill="#373d3f" textLength="101.5" lengthAdjust="spacingAndGlyphs" transform="rotate(-45 356.80 300.20)">04/01/26, 02:20 PM</text><text x="406.30" y="300.20" text-anchor="end" font-size="12" fill="#373d3f" textLength="101.5" lengthAdjust="spacingAndGlyphs" transform="rotate(-45 406.30 300.20)">04/01/26, 02:25 PM</text><text x="455.80" y="300.20" text-anchor="end" font-size="12" fill="#373d3f" textLength="101.5" lengthAdjust="spacingAndGlyphs" transform="rotate(-45 455.80 300.20)">04/01/26, 02:30 PM</text><text x="505.30" y="300.20" text-anchor="end" font-size="12" fill="#373d3f" textLength="101.5" lengthAdjust="spacingAndGlyphs" transform="rotate(-45 505.30 300.20)">04/01/26, 02:35 PM</text><text x="554.80" y="300.20" text-anchor="end" font-size="12" fill="#373d3f" textLength="101.5" lengthAdjust="spacingAndGlyphs" transform="rotate(-45 554.80 300.20)">04/01/26, 02:40 PM</text><text x="604.30" y="300.20" text-anchor="end" font-size="12" fill="#373d3f" textLength="101.5" lengthAdjust="spacingAndGlyphs" transform="rotate(-45 604.30 300.20)">04/01/26, 02:45 PM</text><text x="653.80" y="300.20" text-anchor="end" font-size="12" fill="#373d3f" textLength="101.5" lengthAdjust="spacingAndGlyphs" transform="rotate(-45 653.80 300.20)">04/01/26, 02:50 PM</text></svg><h3><span style="letter-spacing:0.541px;margin-right:-0.541px">Memory Usage</span></h3></div>
<div class="hr" style="left:376px;top:1032px;width:1492px"></div>
<div class="ft" style="left:392.500px"><span style="letter-spacing:0.047px;margin-right:-0.047px">© 2026 All Rights Reserved.</span></div>
<div class="ft" style="left:1557px"><span style="letter-spacing:0.179px;margin-right:-0.179px">Terms of Service</span></div>
<div class="ft" style="left:1673px"><span style="letter-spacing:0.103px;margin-right:-0.103px">Cookie Policy</span></div>
<div class="ft" style="left:1769px"><span style="letter-spacing:0.160px;margin-right:-0.160px">Privacy Policy</span></div>
</div></body></html>
